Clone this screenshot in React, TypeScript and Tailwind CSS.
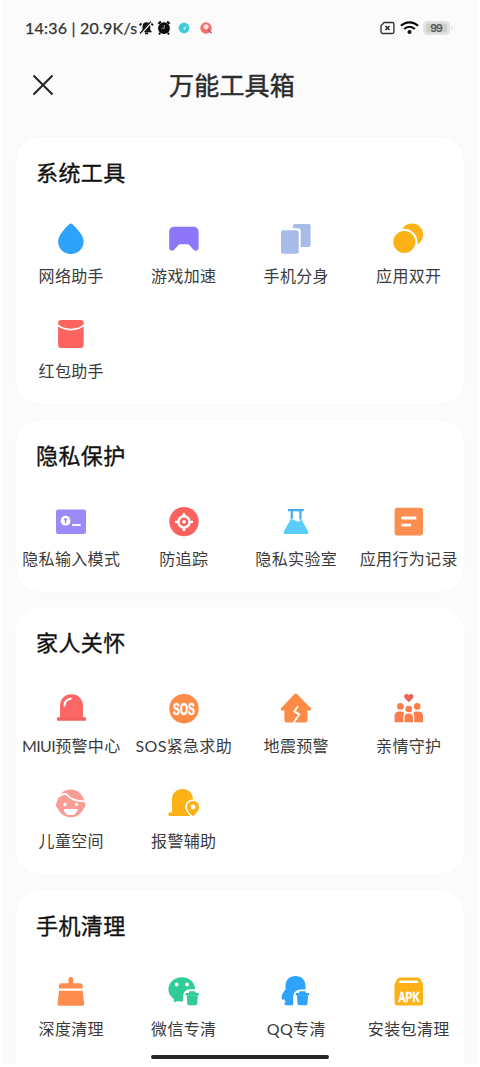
import React from "react";

type Item = { prefix?: string; label: string; icon: React.ReactNode };
type Section = { title: string; items: Item[] };

function Icon({ children }: { children: React.ReactNode }) {
  return (
    <svg viewBox="0 0 30 30" className="h-[30px] w-[30px] shrink-0 overflow-visible" fill="none">
      {children}
    </svg>
  );
}

function Trash({ color }: { color: string }) {
  return (
    <g fill={color}>
      <rect x="20" y="14.3" width="6.6" height="2.6" rx="0.8" />
      <rect x="16.5" y="15.9" width="13.4" height="2.6" rx="0.7" />
      <path d="M17.8 18.2H28.8L28.3 26.8Q28.2 28.2 26.8 28.2H19.8Q18.4 28.2 18.3 26.8Z" />
    </g>
  );
}

const sections: Section[] = [
  {
    title: "系统工具",
    items: [
      {
        label: "网络助手",
        icon: (
          <path
            d="M13.4 0.1Q14.8-1.1 16.2 0.1C20.5 4.2 27.6 11.2 27.6 17.6C27.6 24.8 22 30 14.8 30S2.1 24.8 2.1 17.6C2.1 11.2 9.1 4.2 13.4 0.1Z"
            fill="#2ea3fb"
          />
        ),
      },
      {
        label: "游戏加速",
        icon: (
          <path
            d="M5.3 2.7H24.4C27.6 2.7 29.6 4.8 29.6 8V23.8C29.6 26.5 26.4 27.7 24.6 25.8L20 20.8Q19.5 20.3 18.7 20.3H11Q10.2 20.3 9.7 20.8L5.1 25.8C3.4 27.7 0.2 26.5 0.2 23.8V8C0.2 4.8 2.2 2.7 5.3 2.7Z"
            fill="#8d76f7"
          />
        ),
      },
      {
        label: "手机分身",
        icon: (
          <>
            <rect x="12" y="0" width="17.6" height="23" rx="2" fill="#a8bbe9" />
            <rect x="-2" y="4.3" width="21.7" height="27" rx="3" fill="#fff" />
            <rect x="0" y="6.3" width="17.7" height="23.4" rx="2" fill="#a8bbe9" />
          </>
        ),
      },
      {
        label: "应用双开",
        icon: (
          <>
            <circle cx="17.9" cy="10.7" r="11.2" fill="#fcb116" />
            <circle cx="10.3" cy="18" r="13.2" fill="#fff" />
            <circle cx="10.3" cy="18" r="11" fill="#fcb116" />
          </>
        ),
      },
      {
        label: "红包助手",
        icon: (
          <>
            <rect x="2.1" y="1" width="25.6" height="28" rx="3" fill="#fd6460" />
            <path d="M1.2 5.7C8 12.2 21.8 12.2 28.6 5.7" stroke="#fff" strokeWidth="1.8" />
          </>
        ),
      },
    ],
  },
  {
    title: "隐私保护",
    items: [
      {
        label: "隐私输入模式",
        icon: (
          <>
            <rect x="0" y="2.4" width="30" height="24.6" rx="2" fill="#9d89f8" />
            <circle cx="9.6" cy="13.7" r="4.9" fill="#fff" />
            <circle cx="9.6" cy="12.4" r="1.4" fill="#9d89f8" />
            <path d="M9.6 12.5V16.2" stroke="#9d89f8" strokeWidth="1.4" />
            <path d="M16 18H24.7" stroke="#fff" strokeWidth="1.8" />
          </>
        ),
      },
      {
        label: "防追踪",
        icon: (
          <>
            <circle cx="15" cy="14.6" r="14.7" fill="#fb625d" />
            <circle cx="15" cy="14.9" r="5.6" stroke="#fff" strokeWidth="2.6" />
            <path d="M15 6V9M15 20.8V24M6 14.9H9M21 14.9H24" stroke="#fff" strokeWidth="2.4" />
            <circle cx="15" cy="14.9" r="1.8" fill="#fff" />
          </>
        ),
      },
      {
        label: "隐私实验室",
        icon: (
          <>
            <path d="M9.8 3H20.2V12L27 24.2Q28 27 25.4 27.1H4.6Q1.9 27 3 24.2L9.8 12Z" fill="#58cdfc" />
            <path d="M11.9 4.2H18.4V12.2L19.2 14C17 15 15.2 14.6 13.9 13.3Q12.6 12.1 11 13.1L11.9 11Z" fill="#fff" />
            <path d="M7 3.1H22.8" stroke="#48a9e9" strokeWidth="2.2" />
            <path d="M10.8 4V11.5M19.5 4V11.5" stroke="#48afed" strokeWidth="2" />
          </>
        ),
      },
      {
        label: "应用行为记录",
        icon: (
          <>
            <rect x="0.6" y="0.8" width="28.4" height="27.6" rx="2.6" fill="#fd8e50" />
            <path d="M7.4 11H22.3M7.4 18.2H17" stroke="#fff" strokeWidth="2.8" />
          </>
        ),
      },
    ],
  },
  {
    title: "家人关怀",
    items: [
      {
        prefix: "MIUI",
        label: "预警中心",
        icon: (
          <>
            <path d="M4 24V11.7C4 5 8.8 0.2 15.5 0.2S27 5 27 11.7V24Z" fill="#fd6766" />
            <rect x="1" y="23.2" width="29" height="3.5" rx="0.8" fill="#f2605f" />
            <path d="M8.6 11.6C8.6 7.9 10.8 5.4 14.6 4.8" stroke="#fff" strokeWidth="2.1" strokeLinecap="round" />
          </>
        ),
      },
      {
        label: "SOS紧急求助",
        icon: (
          <>
            <circle cx="15" cy="14.7" r="14.7" fill="#fd8b47" />
            <text
              x="4.1"
              y="20.9"
              textLength="21.8"
              lengthAdjust="spacingAndGlyphs"
              fill="#fff"
              stroke="#fff"
              strokeWidth="0.5"
              className="font-['Liberation_Sans'] text-[16.5px] font-bold"
            >
              SOS
            </text>
          </>
        ),
      },
      {
        label: "地震预警",
        icon: (
          <>
            <path
              d="M13.3 0.2Q14.8-1 16.3 0.2L29.6 13.9C30.8 15.2 30.1 16.4 28.7 16.4H26.5V25.8Q26.5 28.6 23.7 28.6H6.2Q3.4 28.6 3.4 25.8V16.4H1.1C-0.3 16.4-0.9 15.2 0.2 13.9Z"
              fill="#fd8b47"
            />
            <path d="M17 12L13.4 17.4L18.2 20.4L12.5 29" stroke="#fff" strokeWidth="1.9" />
          </>
        ),
      },
      {
        label: "亲情守护",
        icon: (
          <>
            <path
              d="M14.8 8.3L11 4.4C9.3 2.5 10.5 0 12.5 0Q14 0 14.8 1.4Q15.6 0 17.1 0C19.1 0 20.3 2.5 18.6 4.4Z"
              fill="#ee6056"
            />
            <g fill="#fb7d4c">
              <circle cx="6.4" cy="12.4" r="3.3" />
              <circle cx="23.2" cy="12.4" r="3.3" />
              <circle cx="14.8" cy="15" r="3.3" />
              <path d="M0.6 28.3V22.3Q0.6 17.5 5 17.5H7.6Q9.4 17.5 10.4 19.2Q9.3 20.7 9.3 23V28.3Z" />
              <path d="M29 28.3V22.3Q29 17.5 24.6 17.5H22Q20.2 17.5 19.2 19.2Q20.3 20.7 20.3 23V28.3Z" />
              <path d="M10.6 28.3V23.3Q10.6 19.6 14.8 19.6T19 23.3V28.3Z" />
            </g>
          </>
        ),
      },
      {
        label: "儿童空间",
        icon: (
          <>
            <circle cx="14.7" cy="14.4" r="13.8" fill="#fa9c96" />
            <ellipse cx="2.2" cy="16" rx="2.2" ry="3" fill="#fa9c96" />
            <ellipse cx="27.2" cy="16" rx="2.2" ry="3" fill="#fa9c96" />
            <path d="M1.4 8.5Q5.5 4.7 9.8 4.8C14.5 10.6 20 12 28.6 12.4" stroke="#fff" strokeWidth="1.8" />
            <circle cx="9" cy="15.4" r="1.7" fill="#fff" />
            <circle cx="20.6" cy="15.4" r="1.7" fill="#fff" />
            <path d="M7.8 19.9H21.6C21.4 23.7 18.8 26 14.7 26S8 23.7 7.8 19.9Z" fill="#fff" />
          </>
        ),
      },
      {
        label: "报警辅助",
        icon: (
          <>
            <path
              d="M3 23.6V10.6C3 4.3 7.3 0 13.5 0S24 4.3 24 10.6V26.9H0.3Q-0.5 26.9-0.5 26V24.5Q-0.5 23.6 0.3 23.6Z"
              fill="#fcb116"
            />
            <path
              d="M24 12C27.6 12 30.1 14.7 30.1 17.9C30.1 21.6 26.4 25.1 24 27.3C21.6 25.1 17.9 21.6 17.9 17.9C17.9 14.7 20.4 12 24 12Z"
              fill="#fcb116"
              stroke="#fff"
              strokeWidth="3.2"
              paintOrder="stroke"
            />
            <circle cx="24" cy="18" r="2.4" fill="#fff" />
          </>
        ),
      },
    ],
  },
  {
    title: "手机清理",
    items: [
      {
        label: "深度清理",
        icon: (
          <g fill="#fd8d4f">
            <path d="M12.5 7V2.1Q12.5-0.1 14.8-0.1T17.1 2.1V6.2H24Q26.6 6.2 26.6 8.7V11.4H3V8.7Q3 6.2 5.6 6.2H12.5Z" />
            <path d="M3 13.8H26.7L28.2 27Q28.3 28.8 26.5 28.8H3.2Q1.4 28.8 1.5 27Z" />
          </g>
        ),
      },
      {
        label: "微信专清",
        icon: (
          <>
            <path
              d="M12.9 0.2C20.4 0.2 26.2 5.5 26.2 12.4S20.4 24.6 12.9 24.6Q10.8 24.6 9.2 24.1L4.8 25.2V22C1.5 19.6-0.6 16.2-0.6 12.4C-0.6 5.5 5.4 0.2 12.9 0.2Z"
              fill="#31cc96"
            />
            <circle cx="7.6" cy="7.5" r="1.9" fill="#fff" />
            <circle cx="18.1" cy="7.5" r="1.9" fill="#fff" />
            <path d="M14 28V19.5C14 15.5 16.7 12.2 21.2 12.2H32V29H15Z" fill="#fff" />
            <Trash color="#31cc96" />
          </>
        ),
      },
      {
        label: "QQ专清",
        icon: (
          <>
            <path
              d="M14.5-0.9C20.6-0.9 24.5 3.1 24.5 9.4V13L26 17V28.2H5.4C3.7 28.2 2.8 27.3 3.7 26L4.6 24.8C4 23.8 3.5 22.9 3.2 21.9C1.5 23.6 0.6 22.8 0.6 20.3C0.7 17.5 2.4 14.8 4.5 12.6V9.4C4.5 3.1 8.4-0.9 14.5-0.9Z"
              fill="#2ea3fb"
            />
            <path d="M12.2 29V20.2C12.2 15.5 15.2 12.4 19.8 12.4H32V29Z" fill="#fff" />
            <g transform="translate(-1.8)">
              <Trash color="#2ea3fb" />
            </g>
          </>
        ),
      },
      {
        label: "安装包清理",
        icon: (
          <>
            <path
              d="M6 0.4H23.5Q25.3 0.4 26.2 2L28.5 6Q29 6.9 29 7.8V25.4Q29 28.4 26 28.4H3.5Q0.5 28.4 0.5 25.4V7.8Q0.5 6.9 1 6L3.3 2Q4.2 0.4 6 0.4Z"
              fill="#fcb116"
            />
            <path d="M6 3.5H23.5L24.8 6.1H4.7Z" fill="#fff" />
            <text
              x="4.3"
              y="25"
              textLength="21.4"
              lengthAdjust="spacingAndGlyphs"
              fill="#fff"
              stroke="#fff"
              strokeWidth="0.5"
              className="font-['Liberation_Sans'] text-[15px] font-bold"
            >
              APK
            </text>
          </>
        ),
      },
    ],
  },
];

function StatusBar() {
  return (
    <div className="flex h-[50px] items-center pt-[6px] pr-[27px] pl-[25px]">
      <span className="w-[113px] text-[16px] leading-[20px] whitespace-pre text-[#333] tracking-[0.22px] [-webkit-text-stroke:0.25px_#333]">
        14:36 | 20.9K/s
      </span>
      <svg viewBox="0 0 76 16" className="h-4 w-[76px]" fill="none">
        <path d="M4.5 10.8V6.5C4.5 3.8 6 2.3 8.5 2.3S12.3 3.8 12.3 6.5V10L14.2 12.2H3Z" fill="#111" />
        <path d="M7 13.4H10.2M1.6 5.4L3.5 3.4M13.2 3.4L15 5.4" stroke="#111" strokeWidth="1.7" />
        <path d="M14.3 0.8L2.5 14.4" stroke="#fafafa" strokeWidth="2" />
        <path d="M12.8 1.7L2 13.5" stroke="#111" strokeWidth="1.2" />
        <circle cx="26" cy="8.2" r="5.9" fill="#0c0c0c" />
        <path d="M20.3 3.7L22.9 1.6M29.1 1.6L31.7 3.7M22.2 13L21 14.4M29.8 13L31 14.4" stroke="#0c0c0c" strokeWidth="2" />
        <path d="M26.3 5.1V8.3H23.6" stroke="#999" strokeWidth="1" />
        <circle cx="46" cy="8" r="5.4" fill="#43cbd5" />
        <path d="M43.8 10.1L48.5 5.8L46.7 9.9L46 8.4Z" fill="#eaffff" />
        <circle cx="68" cy="8" r="5.7" fill="#ee706d" />
        <circle cx="68" cy="6.8" r="2.6" fill="#ffdeda" />
        <path d="M69.8 9L73.6 13.4" stroke="#b9595a" strokeWidth="1.4" />
      </svg>
      <svg viewBox="0 0 76 16" className="ml-auto h-4 w-[76px]" fill="none">
        <path d="M7.2 2.5H15.2Q16.9 2.5 16.9 4.2V11.8Q16.9 13.5 15.2 13.5H5.7Q4 13.5 4 11.8V5.7Z" stroke="#333" strokeWidth="1.4" />
        <path d="M8.5 6L12.5 10M12.5 6L8.5 10" stroke="#222" strokeWidth="1.5" />
        <path d="M24 5.8C28.8 1.1 36.2 1.1 41 5.8" stroke="#080808" strokeWidth="2.3" />
        <path d="M27.2 9C30.3 6 34.7 6 37.8 9" stroke="#080808" strokeWidth="2.2" />
        <circle cx="32.5" cy="12" r="2" fill="#080808" />
        <rect x="46" y="1.1" width="27" height="14" rx="4.3" fill="#e2e2e2" />
        <path d="M74 5.7L76 8L74 10.3Z" fill="#ddd" />
        <rect x="49" y="3.6" width="21" height="9" rx="1.5" fill="#cecece" />
        <text x="53.3" y="12" fill="#555" className="font-['Inter'] text-[10.5px] font-semibold" textLength="12.5">
          99
        </text>
      </svg>
    </div>
  );
}

function Card({ section }: { section: Section }) {
  return (
    <section className="shrink-0 rounded-[23px] bg-white pb-[21px] shadow-[0_0_1px_#e9e9e9] last:pb-12">
      <h2 className="h-[87px] pl-[20px] text-[22px] leading-[72px] font-normal tracking-[0.4px] text-[#111] [-webkit-text-stroke:0.35px_#111]">
        {section.title}
      </h2>
      <div className="-mx-px grid grid-cols-4 gap-y-[31px]">
        {section.items.map((item) => (
          <div key={item.label} className="flex h-16 flex-col items-center justify-between">
            <Icon>{item.icon}</Icon>
            <span className="text-[16px] leading-6 tracking-[0.35px] whitespace-nowrap text-[#3b3b3b]">
              {item.prefix && <span className="tracking-[-0.6px]">{item.prefix}</span>}
              {item.label}
            </span>
          </div>
        ))}
      </div>
    </section>
  );
}

export default function App() {
  return (
    <main className="relative h-[1067px] w-[480px] overflow-hidden bg-white px-[3px] pt-[3px] font-['Lato','Noto_Sans_CJK_SC',sans-serif]">
      <div className="h-full bg-[#fbfbfb]">
        <div className="-mx-[3px] -mt-[3px]">
          <StatusBar />
        </div>
        <header className="grid h-[87px] grid-cols-[1fr_auto_1fr] items-start pt-[17px]">
          <svg viewBox="0 0 22 22" className="mt-[7px] ml-[29px] h-[22px] w-[22px]" fill="none">
            <path d="M1.5 1.5L20.5 20.5M20.5 1.5L1.5 20.5" stroke="#222" strokeWidth="2" />
          </svg>
          <h1 className="-ml-[16px] text-[25px] leading-9 font-normal tracking-[0.2px] text-[#2b2b2b] [-webkit-text-stroke:0.45px_#2b2b2b]">
            万能工具箱
          </h1>
        </header>
        <div className="flex flex-col gap-[15.5px] px-[13px]">
          {sections.map((section) => (
            <Card key={section.title} section={section} />
          ))}
        </div>
      </div>
      <div className="absolute top-[1055px] left-[151px] h-[4px] w-[178px] rounded-full bg-[#252525]" />
    </main>
  );
}
